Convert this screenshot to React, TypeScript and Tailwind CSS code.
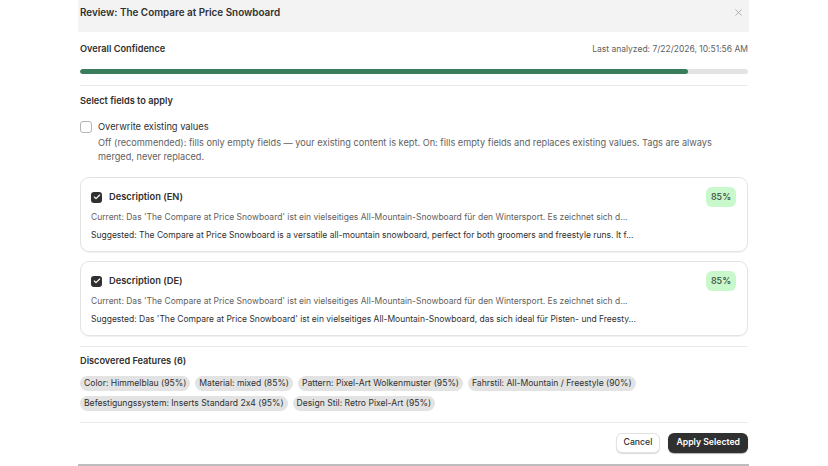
import { X, Check } from "lucide-react";

const features = [
  "Color: Himmelblau (95%)",
  "Material: mixed (85%)",
  "Pattern: Pixel-Art Wolkenmuster (95%)",
  "Fahrstil: All-Mountain / Freestyle (90%)",
  "Befestigungssystem: Inserts Standard 2x4 (95%)",
  "Design Stil: Retro Pixel-Art (95%)",
];

const fields = [
  {
    label: "Description (EN)",
    current:
      "Current: Das 'The Compare at Price Snowboard' ist ein vielseitiges All-Mountain-Snowboard für den Wintersport. Es zeichnet sich d...",
    suggested:
      "Suggested: The Compare at Price Snowboard is a versatile all-mountain snowboard, perfect for both groomers and freestyle runs. It f...",
  },
  {
    label: "Description (DE)",
    current:
      "Current: Das 'The Compare at Price Snowboard' ist ein vielseitiges All-Mountain-Snowboard für den Wintersport. Es zeichnet sich d...",
    suggested:
      "Suggested: Das 'The Compare at Price Snowboard' ist ein vielseitiges All-Mountain-Snowboard, das sich ideal für Pisten- und Freesty...",
  },
];

function FieldCard({ label, current, suggested }: { label: string; current: string; suggested: string }) {
  return (
    <div className="rounded-[9px] border border-[#e3e3e3] px-[10px] pt-[9px] pb-[9px] shadow-[0_1px_0_rgba(0,0,0,0.06)]">
      <div className="flex h-[20px] items-center justify-between">
        <div className="flex items-center gap-[7px]">
          <span className="flex h-[11px] w-[11px] items-center justify-center rounded-[3px] bg-[#303030]">
            <Check size={8} strokeWidth={3.5} className="text-white" />
          </span>
          <span className="text-[9.3px] font-semibold text-[#303030]">{label}</span>
        </div>
        <span className="mr-[1px] flex h-[20px] w-[30px] items-center justify-center rounded-[6px] bg-[#c9f8cc] text-[9px] font-medium text-[#3a4a3e]">
          85%
        </span>
      </div>
      <div className="mt-[4px] text-[8.5px] leading-[13px] text-[#616161]">{current}</div>
      <div className="mt-[5px] text-[8.5px] leading-[13px] text-[#303030]">{suggested}</div>
    </div>
  );
}

export default function App() {
  return (
    <div
      className="h-[466px] w-[828px] overflow-hidden bg-white [font-feature-settings:'calt'_0]"
      style={{ fontFamily: "Inter, 'Noto Sans', sans-serif" }}
    >
      <div className="ml-[78px] w-[671px]">
        <div className="flex h-[32px] items-center justify-between bg-[#f3f3f3] pb-[8px] pl-[2px] pr-[5px]">
          <span className="text-[9.9px] font-semibold text-[#303030]">Review: The Compare at Price Snowboard</span>
          <X size={11} strokeWidth={1.4} className="text-[#8a8a8a]" />
        </div>

        <div className="pl-[2px] pr-[1px]">
          <div className="mt-[10px] flex h-[14px] items-center justify-between">
            <span className="text-[9.2px] font-semibold text-[#303030]">Overall Confidence</span>
            <span className="text-[8.5px] text-[#616161]">Last analyzed: 7/22/2026, 10:51:56 AM</span>
          </div>

          <div className="mt-[13px] h-[5px] w-full overflow-hidden rounded-full bg-[#e3e3e3]">
            <div className="h-full rounded-full bg-[#3a7d5c]" style={{ width: "91%" }} />
          </div>

          <div className="mt-[11px] border-t border-[#ebebeb]" />

          <div className="mt-[8px] h-[14px] text-[9.2px] font-semibold leading-[14px] text-[#303030]">
            Select fields to apply
          </div>

          <div className="mt-[12px] flex h-[14px] items-center gap-[6px]">
            <span className="h-[12px] w-[12px] rounded-[3px] border border-[#b5b5b5] bg-white" />
            <span className="text-[9.3px] text-[#303030]">Overwrite existing values</span>
          </div>
          <p className="mt-[2px] w-[645px] pl-[18px] text-[9.2px] leading-[14px] text-[#616161]">
            Off (recommended): fills only empty fields — your existing content is kept. On: fills empty fields and
            replaces existing values. Tags are always merged, never replaced.
          </p>

          <div className="mt-[13px] flex flex-col gap-[9px]">
            {fields.map((f) => (
              <FieldCard key={f.label} {...f} />
            ))}
          </div>

          <div className="mt-[10px] border-t border-[#ebebeb]" />

          <div className="mt-[7px] h-[14px] text-[9.2px] font-semibold leading-[14px] text-[#303030]">
            Discovered Features (6)
          </div>

          <div className="mt-[8px] flex flex-wrap gap-x-[5px] gap-y-[5px]">
            {features.map((f) => (
              <span
                key={f}
                className="flex h-[15px] items-center rounded-full bg-[#e3e3e3] px-[4px] text-[8.6px] text-[#303030]"
              >
                {f}
              </span>
            ))}
          </div>

          <div className="mt-[11px] border-t border-[#ebebeb]" />

          <div className="mt-[10px] flex justify-end gap-[8px]">
            <button className="h-[20px] rounded-[6px] border border-[#e3e3e3] bg-white px-[7px] text-[8.7px] font-medium text-[#303030] shadow-[0_1px_1px_rgba(0,0,0,0.15)]">
              Cancel
            </button>
            <button className="h-[20px] rounded-[6px] bg-[#303030] px-[8px] text-[8.7px] font-semibold text-white shadow-[0_1px_1px_rgba(0,0,0,0.3)]">
              Apply Selected
            </button>
          </div>
        </div>

        <div className="mt-[11px] h-[2px] bg-[#bdbdbd]" />
      </div>
    </div>
  );
}
